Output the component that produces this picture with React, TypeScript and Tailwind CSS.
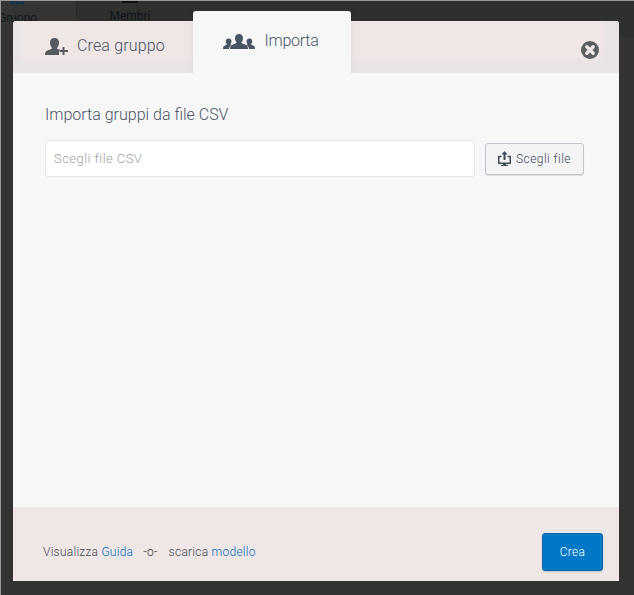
const roboto = { fontFamily: "Roboto, 'Liberation Sans', sans-serif" };

function UserPlus() {
  return (
    <svg width="23" height="17" viewBox="0 0 23 17" fill="#565a60">
      <path d="M5 4.500C5 2 6.500 0 9.500 0S14 2 14 4.500c0 2.500-1 4.500-2 5.500 0 1 1.500 1.500 3.500 2-1.300.8-1.500 2.500-1.500 5H0c0-3 1-4 3-4.700 2-.7 4-1 4-2.300C6 9 5 7 5 4.500z" />
      <path d="M17.500 9h2v3H23v2h-3.500v3h-2v-3H15v-2h2.500z" />
    </svg>
  );
}

function Users() {
  return (
    <svg width="32" height="15" viewBox="0 0 32 15" fill="#485464">
      <path d="M5.500 4.500c2 0 3 1.300 3 3 0 1-.4 2-1 2.600 0 .5.300.8 1 1-1.500 1-2.300 2-2.500 3.900H0c0-2.200.6-3 2-3.500 1-.4 2-.8 2-1.400-.7-.6-1.200-1.600-1.200-2.600 0-1.700 1-3 2.700-3z" />
      <path d="M26.500 4.500c-2 0-3 1.300-3 3 0 1 .4 2 1 2.600 0 .5-.3.8-1 1 1.500 1 2.300 2 2.500 3.900h6c0-2.200-.6-3-2-3.500-1-.4-2-.8-2-1.400.7-.6 1.200-1.600 1.200-2.600 0-1.700-1-3-2.700-3z" />
      <path d="M16 0c2.600 0 4 1.800 4 4.200 0 1.500-.6 3-1.500 4 0 1 1.200 1.500 3 2.100 2.300.8 3.500 1.700 3.500 4.700H7c0-3 1.200-3.900 3.500-4.700 1.800-.6 3-1.100 3-2.100-.9-1-1.500-2.500-1.500-4C12 1.800 13.400 0 16 0z" />
    </svg>
  );
}

function CloseCircle() {
  return (
    <svg width="18" height="18" viewBox="0 0 18 18">
      <circle cx="9" cy="9" r="9" fill="#5c5f62" />
      <path d="M5.800 5.800l6.400 6.400M12.200 5.800l-6.400 6.400" stroke="#f0e8e8" strokeWidth="3.400" strokeLinecap="round" />
    </svg>
  );
}

function Upload() {
  return (
    <svg width="13" height="15" viewBox="0 0 13 15" fill="none">
      <path d="M3.500 5.500H.75v6.750h11.500V5.500H9.500" stroke="#3f4a58" strokeWidth="1.500" />
      <path d="M6.500 0l3 3.500H7.500V9h-2V3.500h-2z" fill="#3f4a58" />
      <path d="M5 12.500h3V14h2v1H3v-1h2z" fill="#3f4a58" />
    </svg>
  );
}

export default function App() {
  return (
    <div className="relative h-[595px] w-[634px] overflow-hidden border-l border-t border-[#9a9a9a] bg-[#333333]" style={roboto}>
      <div className="flex h-9 bg-[#2e302e] text-xs text-[#0f151a]">
        <div className="flex w-[76px] flex-col items-start border-r border-[#282a28] bg-[#343434]">
          <div className="ml-[9px] flex h-[7px] gap-px">
            <span className="h-1 w-1 rounded-full bg-[#16324a]" />
            <span className="h-1 w-1 rounded-full bg-[#16324a]" />
            <span className="h-1 w-1 rounded-full bg-[#16324a]" />
          </div>
          <span className="-ml-[3px] mt-[2px] leading-4">Gruppo</span>
        </div>
        <div className="flex w-[110px] flex-col items-center pr-1">
          <div className="h-[2px] w-4 bg-[#111]" />
          <span className="mt-[5px] leading-4">Membri</span>
        </div>
      </div>

      <div className="absolute left-3 top-5 flex h-[560px] w-[606px] flex-col rounded-t-[3px] bg-[#f7f7f7]">
        <div className="relative flex h-[52px] rounded-t-[3px] bg-[#e8e4e6] pl-[14px] pr-5">
          <div className="absolute inset-0 overflow-hidden rounded-t-[3px]">
            <div className="absolute -top-1 left-[5px] right-4 h-[43px] bg-[#efe6e6] blur-[2px]" />
          </div>
          <div className="relative flex h-[52px] w-[166px] items-center gap-[9px] pl-[18px] text-base font-light tracking-[0.15px] text-[#4a5568]">
            <span className="mt-[-1px]"><UserPlus /></span>
            <span className="-mt-[3px]">Crea gruppo</span>
          </div>
          <div className="relative -mt-[10px] flex h-[62px] w-[158px] items-start justify-center gap-[9px] rounded-t-[3px] bg-[#f7f7f7] pr-[2px] pt-5 text-base font-light tracking-[-0.25px] text-[#4a5568] shadow-[0_0_10px_rgba(0,0,0,0.06)]">
            <span className="mt-[3px]"><Users /></span>
            <span className="-mt-[2px]">Importa</span>
          </div>
          <button className="relative ml-auto mt-[20px] h-[18px] w-[18px]"><CloseCircle /></button>
        </div>

        <div className="relative flex-1 bg-[#f7f7f7] px-8 pt-8">
          <h2 className="text-base font-light leading-5 text-[#4a5568]">Importa gruppi da file CSV</h2>
          <div className="mt-[15px] flex items-center gap-[10px]">
            <div className="flex h-[37px] w-[430px] items-center rounded-[3px] border border-[#e6e6e6] bg-white pl-2 text-[13px] font-light tracking-[0.45px] text-[#a0a0a0]">Scegli file CSV</div>
            <button className="flex h-8 w-[99px] items-center justify-center gap-[5px] rounded-[3px] border border-[#c4c4cc] bg-[#f4f4f6] text-xs font-light tracking-[0.45px] text-[#3f4a58] shadow-[0_1px_1px_rgba(0,0,0,0.1)]">
              <Upload />
              <span>Scegli file</span>
            </button>
          </div>
        </div>

        <div className="relative flex h-[74px] items-center justify-between bg-[#efe6e6] pl-[30px] pr-4 pt-[15px]">
          <div className="flex whitespace-pre text-xs font-light tracking-[0.25px] text-[#434c5a]">
            <span>Visualizza <span className="text-[#006cbc]">Guida</span></span>
            <span className="ml-[10px] mr-[11px] text-[#333]">-o-</span>
            <span>scarica <span className="text-[#006cbc]">modello</span></span>
          </div>
          <button className="flex h-[38px] w-[61px] items-center justify-center rounded-[3px] border border-[#0068a8] bg-[#0078c8] text-xs font-light tracking-[0.3px] text-white shadow-[0_1px_2px_rgba(0,0,0,0.15)]">Crea</button>
        </div>
      </div>
    </div>
  );
}
